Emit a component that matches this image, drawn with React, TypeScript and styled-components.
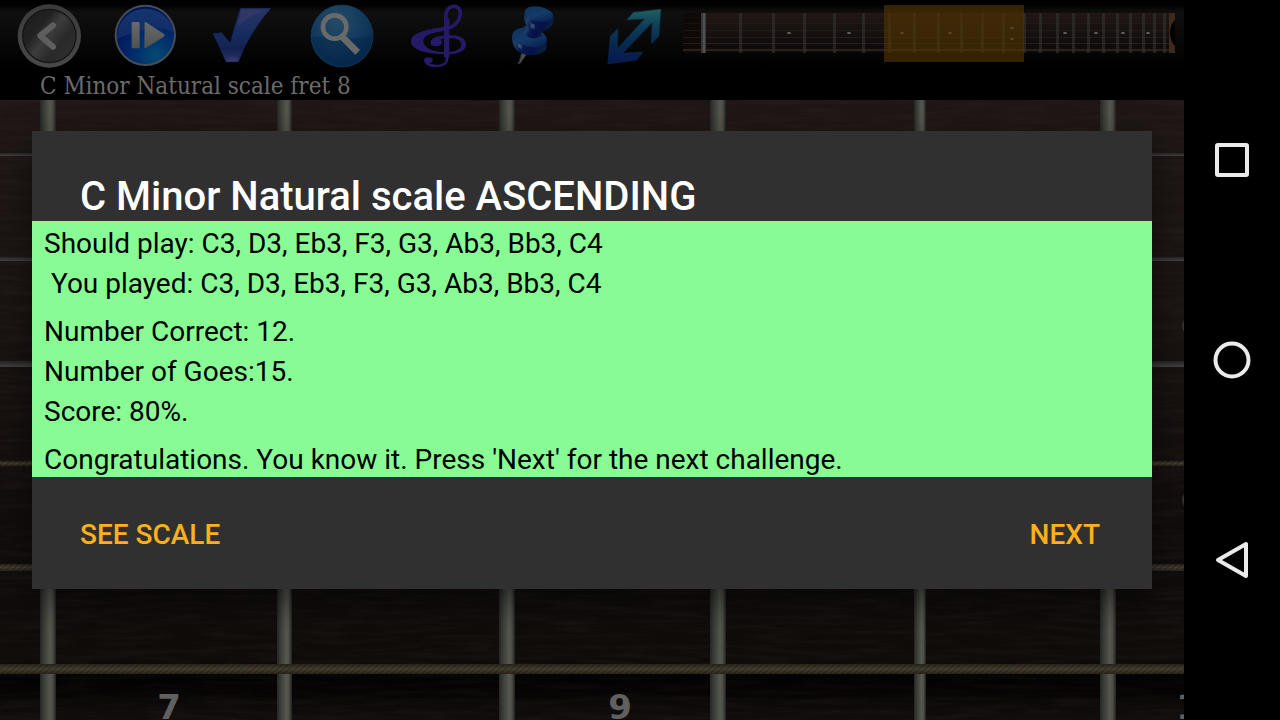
import React from 'react';
import styled, { createGlobalStyle } from 'styled-components';

const GlobalStyle = createGlobalStyle`
  * { box-sizing: border-box; }
  body { margin: 0; background: #000; font-family: Roboto, sans-serif; }
`;

const Screen = styled.div`
  display: flex;
  min-height: 100vh;
  background: #000;
`;

const Game = styled.main`
  position: relative;
  flex: 1;
  min-width: 0;
  display: flex;
  flex-direction: column;
`;

const Header = styled.header`
  height: 100px;
  background: linear-gradient(#000 0, #010101 5px, #0f0f0f 12px, #0b0b0b 30px, #000 68px);
`;

const Toolbar = styled.div`
  display: flex;
  height: 72px;
  padding-right: 9px;
`;

const Tools = styled.div`
  flex: 0 0 683px;
  display: flex;
`;

const ToolButton = styled.button`
  flex: 1;
  display: flex;
  justify-content: center;
  padding: 0;
  border: 0;
  background: none;
`;

const MiniMap = styled.svg`
  flex: 1;
  min-width: 0;
  height: 72px;
`;

const ScaleName = styled.p`
  margin: 0;
  padding-left: 40px;
  font: 24px/28px 'DejaVu Serif Condensed', 'DejaVu Serif', serif;
  color: #6b6b6b;
`;

const Board = styled.div`
  position: relative;
  flex: 1;
  background: #17110f;
  overflow: hidden;
`;

const BoardArt = styled.svg`
  position: absolute;
  inset: 0;
  width: 100%;
  height: 100%;
`;

const Overlay = styled.div`
  position: absolute;
  inset: 0;
  display: flex;
  align-items: center;
  padding: 0 32px;
`;

const Dialog = styled.section`
  flex: 1;
  background: #303030;
  box-shadow: 0 12px 32px rgba(0, 0, 0, 0.5);
`;

const Title = styled.h1`
  margin: 0;
  padding: 42px 48px 0;
  font-size: 40px;
  line-height: 48px;
  font-weight: 500;
  color: #fff;
`;

const Result = styled.div`
  display: flex;
  flex-direction: column;
  gap: 8px;
  padding: 3px 12px 0;
  height: 256px;
  background: #89fb94;
  color: #000;
`;

const Lines = styled.p`
  margin: 0;
  font-size: 28px;
  line-height: 40px;
  white-space: pre-wrap;
`;

const Actions = styled.div`
  display: flex;
  justify-content: space-between;
  align-items: center;
  height: 112px;
  padding: 4px 52px 0 48px;
`;

const Action = styled.button`
  padding: 0;
  border: 0;
  background: none;
  font: 500 28px/40px Roboto, sans-serif;
  color: #fbb01c;
`;

const SystemNav = styled.nav`
  flex: 0 0 96px;
  display: flex;
  flex-direction: column;
  padding: 60px 0;
  background: #000;
`;

const NavButton = styled.button`
  flex: 1;
  display: flex;
  align-items: center;
  justify-content: center;
  padding: 0;
  border: 0;
  background: none;
`;

const NavIcon = styled.svg`
  width: 40px;
  height: 40px;
  fill: none;
  stroke: #ebebeb;
  stroke-width: 4;
  stroke-linejoin: round;
`;

const ToolIcon = ({ x, children }: { x: number; children: React.ReactNode }) => (
  <svg width="80" height="72" viewBox={`${x} 0 240 216`} aria-hidden="true">{children}</svg>
);

const Back = () => (
  <ToolIcon x={26}>
    <defs>
      <linearGradient id="metal" x1="0" y1="0.1" x2="1" y2="0.9">
        <stop offset="0" stopColor="#1c1c1c" /><stop offset="0.3" stopColor="#222" />
        <stop offset="0.48" stopColor="#3c3c3c" /><stop offset="0.7" stopColor="#292929" />
        <stop offset="1" stopColor="#303030" />
      </linearGradient>
      <linearGradient id="rim" x1="0" y1="0" x2="0" y2="1">
        <stop offset="0" stopColor="#3b3b3b" /><stop offset="1" stopColor="#484848" />
      </linearGradient>
    </defs>
    <circle cx="147" cy="108" r="95" fill="url(#rim)" />
    <circle cx="147" cy="108" r="82" fill="#131313" />
    <circle cx="147" cy="108" r="78" fill="url(#metal)" />
    <path d="M158 76 L120 107 L158 140" fill="none" stroke="#5e5e5e" strokeWidth="18" strokeLinecap="round" strokeLinejoin="round" />
  </ToolIcon>
);

const Play = () => (
  <ToolIcon x={319}>
    <defs>
      <radialGradient id="playBlue" cx="0.68" cy="0.85" r="0.8">
        <stop offset="0" stopColor="#044b70" /><stop offset="0.45" stopColor="#022d6c" /><stop offset="1" stopColor="#02145a" />
      </radialGradient>
      <linearGradient id="playShine" x1="0" y1="0" x2="0" y2="1">
        <stop offset="0" stopColor="#16356c" /><stop offset="1" stopColor="#102a67" />
      </linearGradient>
      <linearGradient id="glyph" x1="0" y1="0" x2="0" y2="1">
        <stop offset="0" stopColor="#696969" /><stop offset="1" stopColor="#505252" />
      </linearGradient>
    </defs>
    <circle cx="437" cy="106" r="92" fill="#454d55" />
    <circle cx="437" cy="106" r="86" fill="url(#playBlue)" />
    <path d="M352 119 A86 86 0 0 1 522 95 C490 82 455 84 430 92 C398 100 375 104 352 119Z" fill="url(#playShine)" />
    <rect x="396" y="66" width="24" height="79" rx="3" fill="url(#glyph)" />
    <path d="M435 69 Q435 65 439 67 L493 102 Q497 106 493 110 L439 143 Q434 146 434 141Z" fill="url(#glyph)" />
  </ToolIcon>
);

const Check = () => (
  <ToolIcon x={12}>
    <defs>
      <linearGradient id="tick" x1="0" y1="0" x2="0" y2="1">
        <stop offset="0" stopColor="#2c3464" /><stop offset="0.45" stopColor="#172c60" />
        <stop offset="0.75" stopColor="#122451" /><stop offset="0.86" stopColor="#232c60" /><stop offset="1" stopColor="#3b3d6c" />
      </linearGradient>
    </defs>
    <path d="M39 100 Q55 101 65 98 Q78 116 91 130 Q105 77 122 25 L212 25 Q143 104 115 185 L79 186 Q60 142 39 100Z" fill="url(#tick)" stroke="#172b65" strokeWidth="2" />
    <path d="M124 30 H195 Q155 45 111 80Z" fill="#42436e" opacity="0.35" />
    <path d="M63 145 Q105 148 137 129 L116 180 H82Z" fill="#101f4c" opacity="0.3" />
    <ellipse cx="98" cy="176" rx="15" ry="7" fill="#40416f" opacity="0.4" />
  </ToolIcon>
);

const Search = () => (
  <ToolIcon x={304}>
    <defs>
      <radialGradient id="lensBlue" cx="0.42" cy="0.26" r="0.8">
        <stop offset="0" stopColor="#234c67" /><stop offset="0.55" stopColor="#12395c" /><stop offset="1" stopColor="#042449" />
      </radialGradient>
    </defs>
    <circle cx="424" cy="108" r="93" fill="url(#lensBlue)" stroke="#173e5d" strokeWidth="2" />
    <path d="M332 113 A93 93 0 0 0 517 105 C475 121 430 114 395 110 Q360 106 332 113Z" fill="#032447" opacity="0.4" />
    <circle cx="402" cy="81" r="35" fill="none" stroke="#696969" strokeWidth="14" />
    <path d="M424 110 L471 157" stroke="#696969" strokeWidth="20" />
  </ToolIcon>
);

const Clef = () => (
  <ToolIcon x={-3}>
    <g fill="none" stroke="#241a68">
      <path d="M140 172 V55" strokeWidth="16" />
      <path d="M137 65 V50 C138 29 149 19 162 19 C176 19 182 31 181 44 C178 66 160 80 140 86" strokeWidth="11" />
      <path d="M141 165 V177 C140 192 125 198 110 198 C92 198 79 192 76 182" strokeWidth="8" />
    </g>
    <path fillRule="evenodd" fill="#241a68" d="M151 76 C105 88 33 91 33 124 C33 151 80 163 140 163 C178 163 198 150 198 134 C198 116 178 105 158 106 C138 106 118 107 106 112 C91 118 88 132 98 139 L120 124 C118 116 132 114 150 114 C170 114 184 121 184 134 C184 147 165 156 140 156 C98 156 70 144 70 122 C70 104 100 98 145 91Z" />
    <ellipse cx="109" cy="126" rx="17" ry="13" fill="#241a68" />
    <ellipse cx="85" cy="181" rx="13" ry="9" fill="#241a68" />
  </ToolIcon>
);

const Pin = () => (
  <ToolIcon x={290}>
    <defs>
      <linearGradient id="pinBlue" x1="0" y1="0" x2="1" y2="0.35">
        <stop offset="0" stopColor="#092344" /><stop offset="0.25" stopColor="#1d3f68" />
        <stop offset="0.45" stopColor="#071c4c" /><stop offset="0.78" stopColor="#060f48" /><stop offset="1" stopColor="#081f42" />
      </linearGradient>
      <linearGradient id="pinTop" x1="0" y1="0" x2="1" y2="1">
        <stop offset="0" stopColor="#0c2f5a" /><stop offset="0.5" stopColor="#143c68" /><stop offset="1" stopColor="#061647" />
      </linearGradient>
    </defs>
    <path d="M365 155 L353 192 L360 190 L382 158Z" fill="#4a4c4e" />
    <path d="M362 165 L356 187" stroke="#222" strokeWidth="3" />
    <path d="M337 98 C330 120 340 150 362 160 C390 172 432 164 438 145 L440 115 C425 82 350 76 337 98Z" fill="url(#pinBlue)" />
    <ellipse cx="389" cy="112" rx="50" ry="29" transform="rotate(12 389 112)" fill="url(#pinTop)" />
    <path d="M372 75 Q376 86 369 98 Q390 125 425 109 Q421 98 430 84Z" fill="url(#pinBlue)" />
    <path d="M374 32 C366 58 374 82 398 90 C424 98 454 91 461 60 L456 34Z" fill="url(#pinBlue)" />
    <ellipse cx="416" cy="42" rx="43" ry="22" transform="rotate(12 416 42)" fill="url(#pinTop)" />
    <path d="M391 69 L404 74 L402 88 L390 82Z M353 130 L365 136 L364 148 L353 141Z" fill="#6b819a" opacity="0.45" />
  </ToolIcon>
);

const Arrows = () => (
  <ToolIcon x={582}>
    <defs>
      <linearGradient id="arrow" x1="0" y1="0" x2="0" y2="1">
        <stop offset="0" stopColor="#20605f" /><stop offset="0.3" stopColor="#0d4058" />
        <stop offset="0.6" stopColor="#072b4f" /><stop offset="1" stopColor="#06174f" />
      </linearGradient>
    </defs>
    <path d="M783 27 L700 37 L680 60 L733 57 L652 146 L654 86 L631 108 L624 191 L709 180 L729 156 L668 160 L756 68 L754 132 L777 108Z" fill="url(#arrow)" stroke="#0b2a48" strokeWidth="2" />
  </ToolIcon>
);

const tools = [
  { label: 'Back', Icon: Back },
  { label: 'Play', Icon: Play },
  { label: 'Check', Icon: Check },
  { label: 'Search', Icon: Search },
  { label: 'Scale', Icon: Clef },
  { label: 'Pin', Icon: Pin },
  { label: 'Resize', Icon: Arrows },
];

const miniFrets = [740, 773, 804, 834, 863, 889, 914, 938, 961, 982, 1003, 1024, 1040, 1057, 1073, 1088, 1103, 1117, 1130, 1143, 1154, 1164];
const miniDots = [[789, 33], [849, 33], [902, 33], [950, 33], [1012, 28], [1012, 39], [1065, 33], [1096, 33], [1123, 33], [1148, 33]];
const miniStrings = [17, 23, 30, 37, 43, 49];

const NeckOverview = () => (
  <MiniMap viewBox="683 0 492 72" role="img" aria-label="Neck overview">
    <defs>
      <linearGradient id="miniWood" x1="0" y1="0" x2="0" y2="1">
        <stop offset="0" stopColor="#211714" /><stop offset="1" stopColor="#0c0909" />
      </linearGradient>
    </defs>
    <rect x="683" y="13" width="492" height="40" fill="url(#miniWood)" />
    <rect x="683" y="13" width="18" height="40" fill="#0e0906" />
    {miniStrings.map((y, i) => (
      <rect key={y} x="683" y={y} width="486" height={i > 4 ? 2 : 1} fill="#3b3834" opacity={0.1 + i * 0.09} />
    ))}
    {miniFrets.map((x) => <rect key={x} x={x - 1} y="13" width="3" height="40" fill="#31312f" opacity="0.65" />)}
    <rect x="701" y="13" width="5" height="40" fill="#373737" />
    <rect x="703" y="13" width="2" height="40" fill="#505050" />
    {miniDots.map(([x, y]) => <ellipse key={`${x}-${y}`} cx={x} cy={y} rx="2" ry="1" fill="#666661" />)}
    <rect x="1169" y="13" width="6" height="40" fill="#3e2a1b" />
    <path d="M1175 20 Q1170 25 1170 33 Q1170 41 1175 46Z" fill="#000" />
    <rect x="884" y="5" width="140" height="57" fill="#533600" opacity="0.62" />
  </MiniMap>
);

const frets = [[40, 16], [277, 15], [499, 16], [710, 16], [914, 12], [1100, 16]];
const plainStrings = [[53, 3], [157, 4], [261, 6]];
const woundStrings = [[361, 5], [464, 7], [564, 10]];

const Fretboard = () => (
  <BoardArt viewBox="0 0 1184 620" preserveAspectRatio="xMinYMin slice" role="img" aria-label="Fretboard">
    <defs>
      <linearGradient id="wood" x1="0" y1="0" x2="0" y2="1">
        <stop offset="0" stopColor="#1f1715" /><stop offset="0.35" stopColor="#191311" />
        <stop offset="0.75" stopColor="#100c0b" /><stop offset="0.9" stopColor="#0f0c0a" />
        <stop offset="0.935" stopColor="#050303" /><stop offset="1" stopColor="#110d0c" />
      </linearGradient>
      <filter id="grain" x="0" y="0" width="100%" height="100%" colorInterpolationFilters="sRGB">
        <feTurbulence type="fractalNoise" baseFrequency="0.02 0.2" numOctaves="4" seed="5" />
        <feColorMatrix values="0 0 0 0 0.28  0 0 0 0 0.23  0 0 0 0 0.22  1.4 0 0 0 -0.55" />
      </filter>
      <linearGradient id="fret" x1="0" y1="0" x2="1" y2="0">
        <stop offset="0" stopColor="#252724" /><stop offset="0.25" stopColor="#3a3d38" />
        <stop offset="0.62" stopColor="#56574f" /><stop offset="0.8" stopColor="#4c4d46" /><stop offset="1" stopColor="#20201e" />
      </linearGradient>
      <linearGradient id="steel" x1="0" y1="0" x2="0" y2="1">
        <stop offset="0" stopColor="#262423" /><stop offset="1" stopColor="#434240" />
      </linearGradient>
      <linearGradient id="stringShade" x1="0" y1="0" x2="0" y2="1">
        <stop offset="0" stopColor="#000" stopOpacity="0.4" /><stop offset="0.5" stopColor="#000" stopOpacity="0" />
        <stop offset="1" stopColor="#000" stopOpacity="0.4" />
      </linearGradient>
      <pattern id="winding" width="6" height="10" patternUnits="userSpaceOnUse">
        <rect width="6" height="10" fill="#463e31" />
        <path d="M-12 10 L0 0 M-6 10 L6 0 M0 10 L12 0 M6 10 L18 0" stroke="#383126" strokeWidth="2" />
      </pattern>
    </defs>
    <rect width="1184" height="620" fill="url(#wood)" />
    <rect width="1184" height="620" filter="url(#grain)" opacity="0.25" />
    <rect y="574" width="1184" height="24" fill="#000" opacity="0.25" />
    {frets.map(([x, w]) => <rect key={x} x={x} width={w} height="620" fill="url(#fret)" />)}
    {plainStrings.map(([y, h]) => <rect key={y} y={y} width="1184" height={h} fill="url(#steel)" />)}
    {woundStrings.map(([y, h]) => (
      <g key={y}>
        <rect y={y} width="1184" height={h} fill="url(#winding)" />
        <rect y={y} width="1184" height={h} fill="url(#stringShade)" />
      </g>
    ))}
    <circle cx="1192" cy="226" r="10" fill="#34312e" />
    <circle cx="1192" cy="400" r="10" fill="#34312e" />
    <g fontFamily="DejaVu Sans, sans-serif" fontWeight="700" fontSize="34" fill="#606060" textAnchor="middle">
      <text x="169" y="619">7</text>
      <text x="620" y="619">9</text>
      <text x="1200" y="619">11</text>
    </g>
  </BoardArt>
);

export default function App() {
  return (
    <Screen>
      <GlobalStyle />
      <Game>
        <Header>
          <Toolbar>
            <Tools>
              {tools.map(({ label, Icon }) => (
                <ToolButton key={label} type="button" aria-label={label}><Icon /></ToolButton>
              ))}
            </Tools>
            <NeckOverview />
          </Toolbar>
          <ScaleName>C Minor Natural scale fret 8</ScaleName>
        </Header>
        <Board><Fretboard /></Board>
        <Overlay>
          <Dialog role="dialog" aria-labelledby="result-title">
            <Title id="result-title">C Minor Natural scale ASCENDING</Title>
            <Result>
              <Lines>{'Should play: C3, D3, Eb3, F3, G3, Ab3, Bb3, C4\n You played: C3, D3, Eb3, F3, G3, Ab3, Bb3, C4'}</Lines>
              <Lines>{'Number Correct: 12.\nNumber of Goes:15.\nScore: 80%.'}</Lines>
              <Lines>Congratulations. You know it. Press 'Next' for the next challenge.</Lines>
            </Result>
            <Actions>
              <Action type="button">SEE SCALE</Action>
              <Action type="button">NEXT</Action>
            </Actions>
          </Dialog>
        </Overlay>
      </Game>
      <SystemNav aria-label="System">
        <NavButton type="button" aria-label="Recent apps">
          <NavIcon viewBox="0 0 40 40"><rect x="5" y="5" width="30" height="30" rx="1" /></NavIcon>
        </NavButton>
        <NavButton type="button" aria-label="Home">
          <NavIcon viewBox="0 0 40 40"><circle cx="20" cy="20" r="16.5" /></NavIcon>
        </NavButton>
        <NavButton type="button" aria-label="Back">
          <NavIcon viewBox="0 0 40 40"><path d="M34 4 V36 L6 20Z" /></NavIcon>
        </NavButton>
      </SystemNav>
    </Screen>
  );
}
